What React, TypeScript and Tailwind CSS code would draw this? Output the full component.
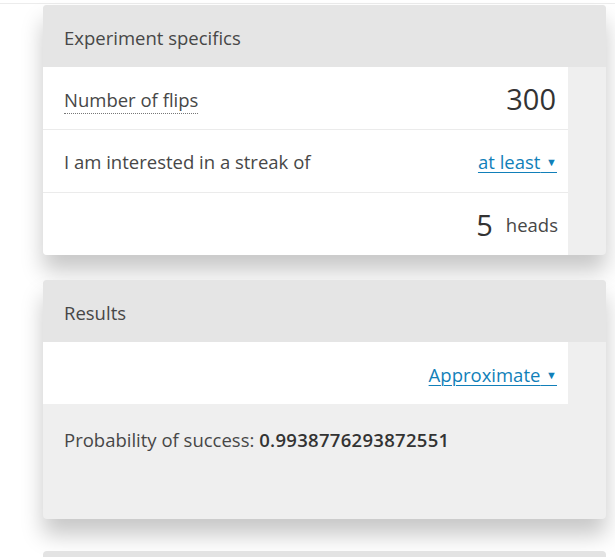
import React from "react";

const font = { fontFamily: '"Open Sans", "Noto Sans", sans-serif' };

function Caret() {
  return <span className="text-[11px] relative -top-[3px]">{"\u00a0\u00a0▼"}</span>;
}

export default function App() {
  return (
    <div className="w-[615px] h-[557px] bg-white overflow-hidden text-[#474747]" style={font}>
      <div className="h-[3px]" />
      <div className="h-px bg-[#ececec]" />
      <div className="pl-[43px] pr-[9px] pt-[1px]">
        {/* Card 1 */}
        <div className="rounded-[4px] bg-[#efefef] shadow-[0_16px_22px_rgba(0,0,0,0.22)] overflow-hidden">
          <div className="h-[62px] bg-[#e5e5e5] flex items-center pl-[21px] pt-[3px] text-[18.5px]">
            Experiment specifics
          </div>
          <div className="mr-[38px] bg-white">
            <div className="h-[63px] flex items-center justify-between pl-[21px] pr-[12px] border-b border-[#ebebeb]">
              <span className="text-[18.5px] border-b border-dotted border-[#777] leading-[26px] mt-[4px]">Number of flips</span>
              <span className="text-[29px] text-[#333] mt-[2px]">300</span>
            </div>
            <div className="h-[63px] flex items-center justify-between pl-[21px] pr-[11px] border-b border-[#ebebeb]">
              <span className="text-[18.5px] mt-[1px]">I am interested in a streak of</span>
              <span className="text-[18.5px] mt-[1px] text-[#117fb9] underline underline-offset-[3px] decoration-1">at least<Caret /></span>
            </div>
            <div className="h-[62px] flex items-center justify-end pr-[10px]">
              <span className="text-[29px] text-[#333] mr-[13px] mt-[1px]">5</span>
              <span className="text-[18.5px] mt-[1px]">heads</span>
            </div>
          </div>
        </div>

        {/* Card 2 */}
        <div className="mt-[25px] rounded-[4px] bg-[#efefef] shadow-[0_16px_22px_rgba(0,0,0,0.22)] overflow-hidden">
          <div className="h-[62px] bg-[#e5e5e5] flex items-center pl-[21px] pt-[3px] text-[18.5px]">
            Results
          </div>
          <div className="mr-[38px] bg-white h-[62px] flex items-center justify-end pr-[11px]">
            <span className="text-[18.5px] mt-[3px] text-[#117fb9] underline underline-offset-[3px] decoration-1">Approximate<Caret /></span>
          </div>
          <div className="h-[115px] pl-[21px] pt-[22px] text-[18.5px]">
            Probability of success: <span className="font-semibold text-[#333] tracking-[0.3px]">0.9938776293872551</span>
          </div>
        </div>

        {/* Card 3 */}
        <div className="mt-[32px] rounded-[4px] bg-[#e3e3e3] h-[40px]" />
      </div>
    </div>
  );
}
